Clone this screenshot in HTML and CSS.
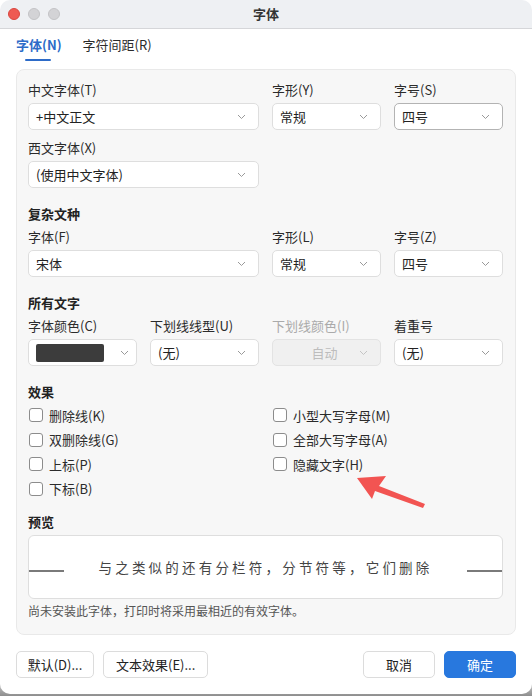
FILE: index.html
```html
<!DOCTYPE html>
<html lang="zh">
<head>
<meta charset="utf-8">
<link rel="stylesheet" href="styles.css">
</head>
<body>
<div class="window">
  <div class="titlebar">
    <div class="lights">
      <span class="light red"></span>
      <span class="light gray"></span>
      <span class="light gray"></span>
    </div>
    <div class="title">字体</div>
  </div>
  <div class="tabs">
    <div class="tab active">字体(N)</div>
    <div class="tab">字符间距(R)</div>
  </div>
  <div class="panel">
    <div class="grid">
      <div class="field span2">
        <div class="label">中文字体(T)</div>
        <div class="select"><span>+中文正文</span><svg class="chev" width="9" height="6" viewBox="0 0 9 6"><path d="M1 1 L4.5 4.5 L8 1"/></svg></div>
      </div>
      <div class="field">
        <div class="label">字形(Y)</div>
        <div class="select"><span>常规</span><svg class="chev" width="9" height="6" viewBox="0 0 9 6"><path d="M1 1 L4.5 4.5 L8 1"/></svg></div>
      </div>
      <div class="field">
        <div class="label">字号(S)</div>
        <div class="select focus"><span>四号</span><svg class="chev" width="9" height="6" viewBox="0 0 9 6"><path d="M1 1 L4.5 4.5 L8 1"/></svg></div>
      </div>
    </div>
    <div class="grid row2">
      <div class="field span2">
        <div class="label">西文字体(X)</div>
        <div class="select"><span>(使用中文字体)</span><svg class="chev" width="9" height="6" viewBox="0 0 9 6"><path d="M1 1 L4.5 4.5 L8 1"/></svg></div>
      </div>
    </div>

    <div class="section">复杂文种</div>
    <div class="grid tight">
      <div class="field span2">
        <div class="label">字体(F)</div>
        <div class="select"><span>宋体</span><svg class="chev" width="9" height="6" viewBox="0 0 9 6"><path d="M1 1 L4.5 4.5 L8 1"/></svg></div>
      </div>
      <div class="field">
        <div class="label">字形(L)</div>
        <div class="select"><span>常规</span><svg class="chev" width="9" height="6" viewBox="0 0 9 6"><path d="M1 1 L4.5 4.5 L8 1"/></svg></div>
      </div>
      <div class="field">
        <div class="label">字号(Z)</div>
        <div class="select"><span>四号</span><svg class="chev" width="9" height="6" viewBox="0 0 9 6"><path d="M1 1 L4.5 4.5 L8 1"/></svg></div>
      </div>
    </div>

    <div class="section">所有文字</div>
    <div class="grid tight">
      <div class="field">
        <div class="label">字体颜色(C)</div>
        <div class="select"><span class="swatch"></span><svg class="chev" width="9" height="6" viewBox="0 0 9 6"><path d="M1 1 L4.5 4.5 L8 1"/></svg></div>
      </div>
      <div class="field">
        <div class="label">下划线线型(U)</div>
        <div class="select"><span>(无)</span><svg class="chev" width="9" height="6" viewBox="0 0 9 6"><path d="M1 1 L4.5 4.5 L8 1"/></svg></div>
      </div>
      <div class="field disabled">
        <div class="label">下划线颜色(I)</div>
        <div class="select"><span class="center">自动</span><svg class="chev" width="9" height="6" viewBox="0 0 9 6"><path d="M1 1 L4.5 4.5 L8 1"/></svg></div>
      </div>
      <div class="field">
        <div class="label">着重号</div>
        <div class="select"><span>(无)</span><svg class="chev" width="9" height="6" viewBox="0 0 9 6"><path d="M1 1 L4.5 4.5 L8 1"/></svg></div>
      </div>
    </div>

    <div class="section">效果</div>
    <div class="checks">
      <div class="col">
        <label class="check"><span class="box"></span>删除线(K)</label>
        <label class="check"><span class="box"></span>双删除线(G)</label>
        <label class="check"><span class="box"></span>上标(P)</label>
        <label class="check"><span class="box"></span>下标(B)</label>
      </div>
      <div class="col">
        <label class="check"><span class="box"></span>小型大写字母(M)</label>
        <label class="check"><span class="box"></span>全部大写字母(A)</label>
        <label class="check"><span class="box"></span>隐藏文字(H)</label>
      </div>
    </div>

    <div class="section preview-title">预览</div>
    <div class="preview">
      <span class="rule"></span>
      <span class="sample">与之类似的还有分栏符，分节符等，它们删除</span>
      <span class="rule"></span>
    </div>
    <div class="note">尚未安装此字体，打印时将采用最相近的有效字体。</div>
  </div>

  <div class="footer">
    <div class="btn">默认(D)...</div>
    <div class="btn">文本效果(E)...</div>
    <div class="spacer"></div>
    <div class="btn wide">取消</div>
    <div class="btn wide primary">确定</div>
  </div>

  <svg class="arrow" width="532" height="696" viewBox="0 0 532 696">
    <polygon points="357,478 386,476 379,486 425,504 423,508 375,491 372,499" fill="#f25452"/>
  </svg>
</div>
</body>
</html>
```

FILE: styles.css
```css
* { box-sizing: border-box; }
html, body { margin: 0; padding: 0; }
body {
  width: 532px;
  height: 696px;
  background: linear-gradient(to bottom, #ffffff 0, #ffffff 670px, #8e8e8e 696px);
  font-family: "Noto Sans CJK SC", "Noto Sans", sans-serif;
  font-size: 13px;
  color: #2b2b2b;
}
.window {
  position: relative;
  width: 532px;
  height: 694px;
  background: #fff;
  border-radius: 10px;
  overflow: hidden;
}
.titlebar {
  position: relative;
  height: 29px;
  background: #eef0f3;
  border-bottom: 1px solid #d5d6d9;
  display: flex;
  align-items: center;
  justify-content: center;
}
.lights {
  position: absolute;
  left: 8px;
  top: 8px;
  display: flex;
  gap: 8px;
}
.light {
  width: 12px;
  height: 12px;
  border-radius: 50%;
}
.light.red { background: #ee5a52; border: 1px solid #d9463f; }
.light.gray { background: #d3d3d6; border: 1px solid #c3c3c6; }
.title {
  font-size: 13px;
  font-weight: 600;
  color: #333;
  margin-top: -2px;
}
.tabs {
  height: 40px;
  display: flex;
  gap: 21px;
  padding: 5px 0 0 16px;
}
.tab {
  position: relative;
  height: 22px;
  line-height: 22px;
  font-size: 13px;
  color: #2b2b2b;
}
.tab.active {
  color: #2d6bc8;
  font-weight: 600;
}
.tab.active::after {
  content: "";
  position: absolute;
  left: 9px;
  width: 26px;
  top: 25px;
  height: 2px;
  border-radius: 1px;
  background: #2d6bc8;
}
.panel {
  margin: 0 16px;
  height: 566px;
  background: #f7f7f7;
  border: 1px solid #e9e9e9;
  border-radius: 8px;
  padding: 11px 12px 0 11px;
}
.grid {
  display: grid;
  grid-template-columns: 109px 109px 109px 109px;
  column-gap: 13px;
}
.grid.row2 { margin-top: 9px; }
.span2 { grid-column: span 2; }
.field { display: flex; flex-direction: column; }
.label {
  height: 18px;
  line-height: 18px;
  font-size: 13px;
  margin-bottom: 4px;
  white-space: nowrap;
}
.grid.tight .label { margin-bottom: 4px; }
.select {
  height: 27px;
  background: #fff;
  border: 1px solid #dedede;
  border-radius: 5px;
  display: flex;
  align-items: center;
  padding: 0 12px 0 7px;
  font-size: 13px;
  color: #222;
}
.select.focus { border-color: #b3b3b3; }
.select span { flex: 1; white-space: nowrap; }
.select span.center { text-align: center; padding-left: 10px; }
.chev { flex: none; }
.chev path { fill: none; stroke: #999; stroke-width: 1; }
.swatch {
  flex: none !important;
  width: 68px;
  height: 18px;
  background: #3c3c3c;
  border-radius: 2px;
  margin-right: 16px;
}
.disabled .label { color: #aaaaaa; }
.disabled .select { background: #f0f0f0; border-color: #e3e3e3; color: #bdbdbd; }
.disabled .chev path { stroke: #c4c4c4; }
.section {
  margin-top: 17px;
  height: 18px;
  line-height: 18px;
  font-weight: 700;
  font-size: 13px;
  color: #222;
  margin-bottom: 5px;
}
.checks {
  display: flex;
  margin-top: -3px;
}
.checks .col { display: flex; flex-direction: column; }
.checks .col:first-child { width: 244px; }
.check {
  height: 24.5px;
  display: flex;
  align-items: center;
  font-size: 13px;
  color: #2b2b2b;
}
.box {
  width: 14px;
  height: 14px;
  border: 1px solid #8c8c8c;
  border-radius: 3px;
  background: #fff;
  margin: 0 6px 0 1px;
}
.preview-title { margin-top: 12px; margin-bottom: 4px; }
.preview {
  height: 64px;
  background: #fff;
  border: 1px solid #dedede;
  border-radius: 6px;
  display: flex;
  align-items: center;
  margin-top: 0;
}
.rule {
  width: 35px;
  height: 2px;
  background: #7a7a7a;
  margin-top: 7px;
}
.sample {
  flex: 1;
  text-align: center;
  font-size: 13.5px;
  letter-spacing: 3.2px;
  color: #444;
  white-space: nowrap;
}
.note {
  margin-top: 3px;
  height: 18px;
  line-height: 18px;
  font-size: 12px;
  color: #555;
}
.footer {
  display: flex;
  padding: 0 16px;
  margin-top: 16px;
  gap: 9px;
}
.spacer { flex: 1; }
.btn {
  height: 27px;
  line-height: 25px;
  padding: 0 12px;
  border: 1px solid #dcdcdc;
  border-radius: 5px;
  background: #fff;
  font-size: 13px;
  color: #222;
  text-align: center;
}
.btn:first-child { width: 78px; padding: 0; }
.btn.wide { width: 72px; padding: 0; }
.btn.primary {
  background: #2878de;
  border-color: #2878de;
  color: #fff;
}
.arrow {
  position: absolute;
  left: 0;
  top: 0;
  pointer-events: none;
}
```
